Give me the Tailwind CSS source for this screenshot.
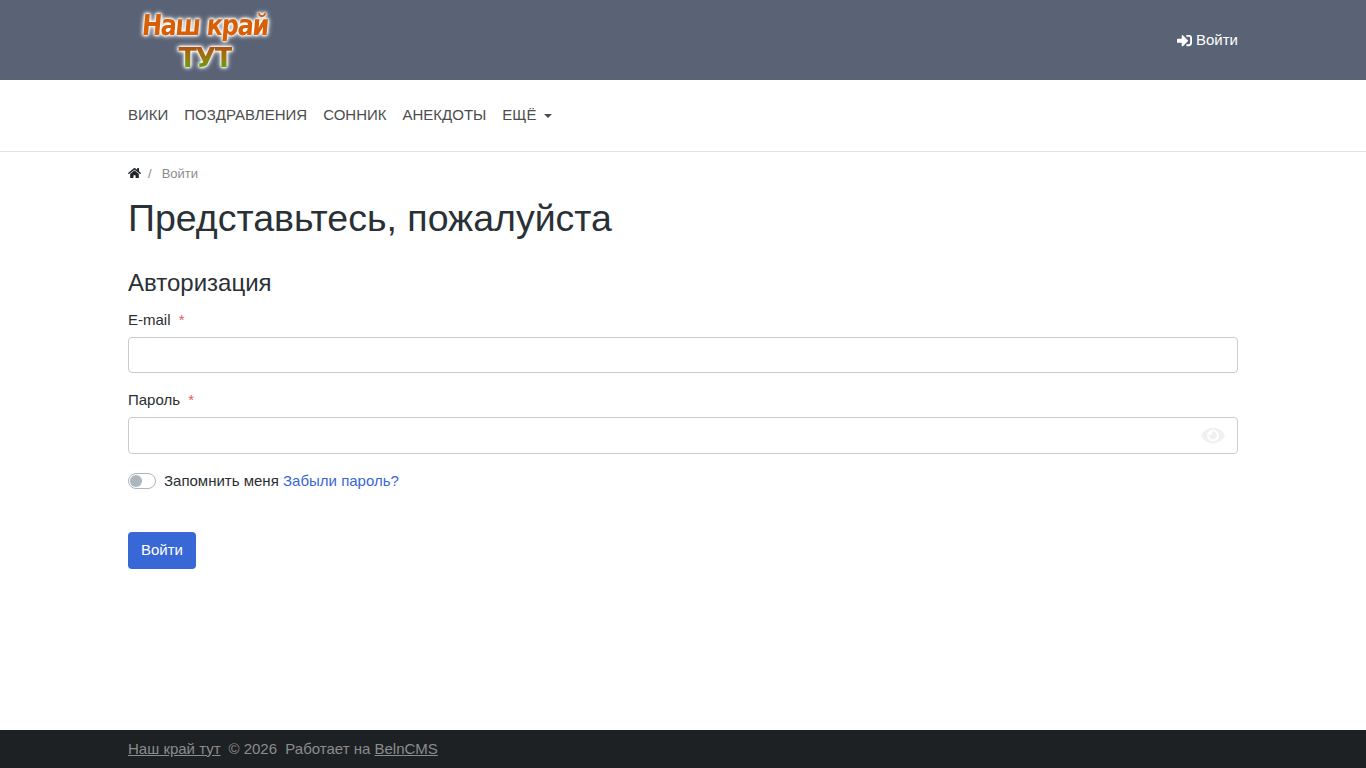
<!DOCTYPE html>
<html lang="ru">

<head>
    <meta charset="UTF-8">
    <meta name="viewport" content="width=device-width, initial-scale=1.0">
    <title>Представьтесь, пожалуйста</title>
    <script src="https://cdn.jsdelivr.net/npm/@tailwindcss/browser@4"></script>
</head>

<body class="bg-white font-['Liberation_Sans',Arial,sans-serif] text-[15px] text-[#2a2e31]">
    <div class="flex flex-col h-[768px] overflow-hidden">
        <!-- Top bar -->
        <header class="h-20 shrink-0 bg-[#5a6376]">
            <div class="w-[1110px] mx-auto h-full flex items-center justify-between">
                <a href="#" class="ml-2.5 w-[134px] h-[64px] pt-[4px] flex flex-col items-center justify-center font-['DejaVu_Sans',sans-serif] font-bold leading-none [filter:drop-shadow(0_0_1px_#ffffff)_drop-shadow(0_0_1px_#ffffff)_drop-shadow(0_0_2px_#ffffff)]">
                    <span class="text-[24px] tracking-[-1.3px] whitespace-nowrap text-[#d85f05] scale-y-[1.2] -skew-x-6">Наш край</span>
                    <span class="mt-[7px] text-[27px] tracking-[-1.5px] bg-gradient-to-b from-[#b8400f] to-[#4fa50c] bg-clip-text text-transparent">ТУТ</span>
                </a>
                <a href="#" class="flex items-center gap-1 text-white">
                    <svg class="w-[15px] h-[15px] fill-current" viewBox="0 0 512 512"><path d="M416 448h-84c-6.6 0-12-5.4-12-12v-40c0-6.6 5.4-12 12-12h84c17.7 0 32-14.3 32-32V160c0-17.7-14.3-32-32-32h-84c-6.6 0-12-5.4-12-12V76c0-6.6 5.4-12 12-12h84c53 0 96 43 96 96v192c0 53-43 96-96 96zm-47-201L201 79c-15-15-41-4.5-41 17v96H24c-13.3 0-24 10.7-24 24v96c0 13.3 10.7 24 24 24h136v96c0 21.5 26 32 41 17l168-168c9.3-9.4 9.3-24.6 0-34z"/></svg>
                    Войти
                </a>
            </div>
        </header>

        <!-- Menu -->
        <nav class="h-[72px] shrink-0 border-b border-[#dee2e6]">
            <div class="w-[1110px] mx-auto h-full flex items-center gap-4 text-[#4d4d4d]">
                <a href="#">ВИКИ</a>
                <a href="#">ПОЗДРАВЛЕНИЯ</a>
                <a href="#">СОННИК</a>
                <a href="#">АНЕКДОТЫ</a>
                <a href="#" class="flex items-center gap-2">ЕЩЁ
                    <span class="w-0 h-0 border-x-[4px] border-x-transparent border-t-[4px] border-t-[#4d4d4d]"></span>
                </a>
            </div>
        </nav>

        <main class="flex-1">
            <div class="w-[1110px] mx-auto">
                <!-- Breadcrumb -->
                <div class="flex items-center h-[14px] mt-[15px] text-[13px] text-[#8c8c8c]">
                    <svg class="w-[13px] h-[12px] -mt-[2px] fill-[#212529]" viewBox="0 0 576 512"><path d="M280.37 148.26L96 300.11V464a16 16 0 0 0 16 16l112.06-.29a16 16 0 0 0 15.92-16V368a16 16 0 0 1 16-16h64a16 16 0 0 1 16 16v95.64a16 16 0 0 0 16 16.05L464 480a16 16 0 0 0 16-16V300L295.67 148.26a12.19 12.19 0 0 0-15.3 0zM571.6 251.47L488 182.56V44.05a12 12 0 0 0-12-12h-56a12 12 0 0 0-12 12v72.61L318.47 43a48 48 0 0 0-61 0L4.34 251.47a12 12 0 0 0-1.6 16.9l25.5 31A12 12 0 0 0 45.15 301l235.22-193.74a12.19 12.19 0 0 1 15.3 0L530.9 301a12 12 0 0 0 16.9-1.6l25.5-31a12 12 0 0 0-1.7-16.93z"/></svg>
                    <span class="ml-[7px]">/</span>
                    <span class="ml-[10px]">Войти</span>
                </div>

                <h1 class="mt-[15px] text-[37.5px] leading-[45px] text-[#2a3136]">Представьтесь, пожалуйста</h1>
                <h3 class="mt-[27px] text-[24px] leading-[29px] text-[#2a3136]">Авторизация</h3>

                <!-- Login form -->
                <form class="mt-[12px]">
                    <label class="block leading-[22px]">E-mail <span class="ml-1 text-[#e0605a]">*</span></label>
                    <input type="email" class="block mt-[6px] w-full h-9 px-3 bg-white border border-[#c8ccd0] rounded">

                    <label class="block mt-[16px] leading-[22px]">Пароль <span class="ml-1 text-[#e0605a]">*</span></label>
                    <div class="relative mt-[6px]">
                        <input type="password" class="block w-full h-[37px] px-3 bg-white border border-[#c8ccd0] rounded">
                        <svg class="absolute right-[13px] top-[8px] w-[24px] h-[21px] fill-[#eff0f1]" viewBox="0 0 576 512"><path d="M572.52 241.4C518.29 135.59 410.93 64 288 64S57.68 135.64 3.48 241.41a32.35 32.35 0 0 0 0 29.19C57.71 376.41 165.07 448 288 448s230.32-71.64 284.52-177.41a32.35 32.35 0 0 0 0-29.19zM288 400a144 144 0 1 1 144-144 143.93 143.93 0 0 1-144 144zm0-240a95.31 95.31 0 0 0-25.31 3.79 47.85 47.85 0 0 1-66.9 66.9A95.78 95.78 0 1 0 288 160z"/></svg>
                    </div>

                    <div class="flex items-center mt-[16px] h-[22px]">
                        <span class="w-7 h-4 flex items-center pl-[1px] border border-[#adb5bd] rounded-full bg-white">
                            <span class="w-3 h-3 rounded-full bg-[#adb5bd]"></span>
                        </span>
                        <span class="ml-2">Запомнить меня</span>
                        <a href="#" class="ml-[4.3px] text-[#3867d6]">Забыли пароль?</a>
                    </div>

                    <button type="button" class="block mt-[40px] w-[68px] h-[37px] bg-[#3867d6] text-white rounded">Войти</button>
                </form>
            </div>
        </main>

        <!-- Footer -->
        <footer class="h-[38px] shrink-0 bg-[#1d2124] text-[#8c8c8c]">
            <div class="w-[1110px] mx-auto h-full flex items-center whitespace-pre">
                <a href="#" class="underline">Наш край тут</a><span class="ml-[-0.5px]">  © 2026  Работает на </span><a href="#" class="underline">BelnCMS</a>
            </div>
        </footer>
    </div>
</body>

</html>
